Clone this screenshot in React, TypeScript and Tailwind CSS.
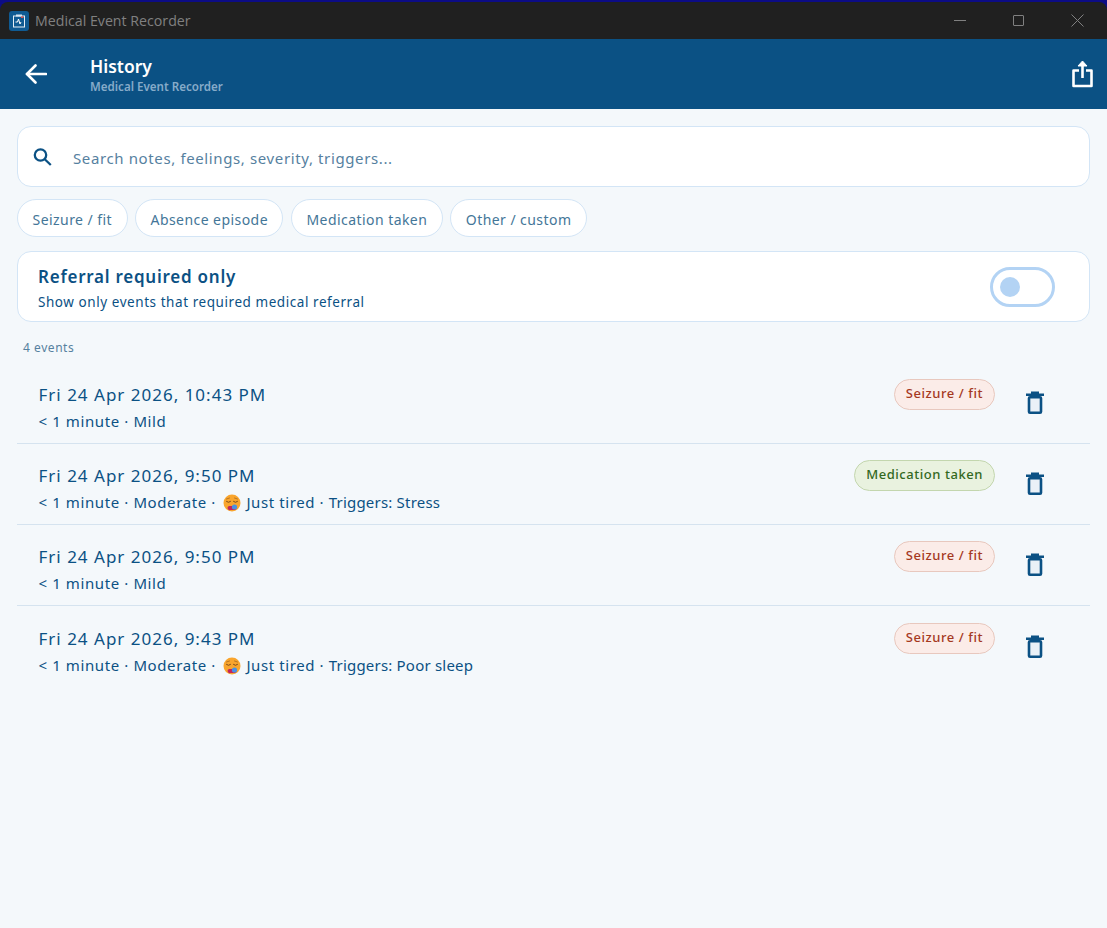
const events = [
  { when: 'Fri 24 Apr 2026, 10:43 PM', detail: '< 1 minute · Mild', kind: 'Seizure / fit' },
  { when: 'Fri 24 Apr 2026, 9:50 PM', detail: '< 1 minute · Moderate · ', feeling: 'Just tired · ', triggers: 'Triggers: Stress', kind: 'Medication taken' },
  { when: 'Fri 24 Apr 2026, 9:50 PM', detail: '< 1 minute · Mild', kind: 'Seizure / fit' },
  { when: 'Fri 24 Apr 2026, 9:43 PM', detail: '< 1 minute · Moderate · ', feeling: 'Just tired · ', triggers: 'Triggers: Poor sleep', kind: 'Seizure / fit' },
]

const chips = ['Seizure / fit', 'Absence episode', 'Medication taken', 'Other / custom']

function TiredFace() {
  return (
    <svg className="w-[18px] h-[18px] ml-[2.500px] mr-[5.500px] mt-[1px] shrink-0" viewBox="0 0 18 18" fill="none">
      <circle cx="9" cy="9" r="8.500" fill="#f9a52d" />
      <path d="M3.500 7.500q2 1.800 4 0M10.500 7.500q2 1.800 4 0" stroke="#7a4a1a" strokeWidth="1" strokeLinecap="round" />
      <path d="M3.500 5l3-1M14.500 5l-3-1" stroke="#a8681f" strokeWidth="0.800" strokeLinecap="round" />
      <path d="M6 12h5.500a2 2 0 0 1 0 4h-4a2 2 0 0 1-1.500-4z" fill="#c2255c" />
      <circle cx="11.500" cy="13" r="2.600" fill="#4a90e2" />
    </svg>
  )
}

function BackIcon() {
  return (
    <svg className="w-[22px] h-[20px]" viewBox="0 0 22 20" fill="none" stroke="white" strokeWidth="2.600" strokeLinecap="round" strokeLinejoin="round">
      <path d="M21 10H2" />
      <path d="M10.500 1.500L2 10l8.500 8.500" />
    </svg>
  )
}

function SearchIcon() {
  return (
    <svg className="w-[19px] h-[18px]" viewBox="0 0 19 18" fill="none" stroke="#0b5184" strokeWidth="2.300">
      <circle cx="7.500" cy="7" r="5.700" />
      <path d="M11.500 11l6.300 6" />
    </svg>
  )
}

function TrashIcon() {
  return (
    <svg className="w-[18px] h-[23px]" viewBox="0 0 18 23" fill="none">
      <path d="M5 0.500h8v2h5v2.500H0V2.500h5z" fill="#0b5184" />
      <rect x="3" y="6.200" width="12" height="15.500" rx="1" stroke="#0b5184" strokeWidth="2.600" fill="#eaf1f7" />
    </svg>
  )
}

function ShareIcon() {
  return (
    <svg className="w-[21px] h-[28px]" viewBox="0 0 21 28" fill="none" stroke="white" strokeWidth="2.600" strokeLinejoin="round">
      <path d="M7 10.500H1.500v15.500h18V10.500H14" />
      <path d="M10.500 18V4" />
      <path d="M6 6L10.500 1 15 6z" fill="white" strokeWidth="1" />
    </svg>
  )
}

function AppLogo() {
  return (
    <svg className="w-5 h-5" viewBox="0 0 20 20">
      <rect width="20" height="20" rx="3" fill="#0f5a92" />
      <rect x="4.500" y="5" width="11" height="11" fill="none" stroke="#e6eef5" strokeWidth="1" />
      <rect x="7" y="3.500" width="6" height="2" fill="#d8e6f2" />
      <path d="M6.500 11h2l1-3 1.500 5 1-2" fill="none" stroke="#fff" strokeWidth="1" />
      <rect x="12" y="5.500" width="2.500" height="1.500" fill="#d9534f" />
    </svg>
  )
}

function Badge({ kind }: { kind: string }) {
  const med = kind === 'Medication taken'
  return (
    <span
      className={
        med
          ? 'h-[31px] px-[11px] flex items-center rounded-full border border-[#c3d6ae] bg-[#e9f2df] text-[#33691e] text-[13px] font-medium tracking-[0.55px]'
          : 'h-[31px] px-[11px] flex items-center rounded-full border border-[#e8c8be] bg-[#fbece8] text-[#a5391f] text-[13px] font-medium tracking-[0.55px]'
      }
    >
      {kind}
    </span>
  )
}

export default function App() {
  return (
    <div className="w-[1107px] h-[928px] flex flex-col overflow-hidden bg-[#0c0c86] font-['Noto_Sans','Open_Sans',sans-serif]">
      {/* window title bar */}
      <div className="h-[37px] mt-[2px] rounded-t-[8px] bg-[#202020] flex items-center pl-[9px]">
        <AppLogo />
        <span className="ml-[6px] text-[14.200px] font-['Open_Sans',sans-serif] text-[#808080]">Medical Event Recorder</span>
        <div className="ml-auto flex items-center">
          <div className="w-[59px] flex justify-center"><div className="w-3 h-px bg-[#808080]" /></div>
          <div className="w-[59px] flex justify-center"><div className="w-[11px] h-[11px] border border-[#808080] rounded-[1px]" /></div>
          <div className="w-[59px] flex justify-center">
            <svg className="w-[13px] h-[13px]" viewBox="0 0 13 13" stroke="#808080" strokeWidth="1"><path d="M0.500 0.500l12 12M12.500 0.500l-12 12" /></svg>
          </div>
        </div>
      </div>

      {/* app bar */}
      <header className="h-[70px] bg-[#0b5184] flex items-center text-white">
        <div className="w-[71px] pl-[25px]">
          <BackIcon />
        </div>
        <div className="ml-[19px] flex flex-col pt-[1px]">
          <span className="text-[17.500px] leading-[24px] font-semibold">History</span>
          <span className="text-[11.600px] leading-[18px] font-semibold text-[#86abc9]">Medical Event Recorder</span>
        </div>
        <div className="ml-auto mr-[14px]">
          <ShareIcon />
        </div>
      </header>

      <main className="flex-1 bg-[#f4f8fb] flex flex-col px-[17px] pt-[17px]">
        <div className="h-[61px] rounded-[14px] border border-[#d3e5f6] bg-white flex items-center pl-[15px]">
          <SearchIcon />
          <span className="ml-[21px] pt-[3px] text-[15px] tracking-[0.62px] text-[#56819f]">Search notes, feelings, severity, triggers...</span>
        </div>

        <div className="flex gap-[7.500px] mt-[12px]">
          {chips.map((chip) => (
            <span key={chip} className="h-[38px] px-[14.500px] pt-[2px] flex items-center rounded-full border border-[#d3e5f6] bg-white text-[14px] tracking-[0.44px] text-[#447698]">
              {chip}
            </span>
          ))}
        </div>

        <div className="h-[71px] mt-[14px] rounded-[14px] border border-[#d3e5f6] bg-white flex items-center pl-[20px] pr-[34px]">
          <div className="flex flex-col pt-[6px]">
            <span className="text-[17px] leading-[25px] font-semibold tracking-[0.75px] text-[#0b5184]">Referral required only</span>
            <span className="text-[13.500px] leading-[27px] tracking-[0.56px] text-[#0b5184]">Show only events that required medical referral</span>
          </div>
          <div className="ml-auto w-[65px] h-[40px] rounded-full border-[3px] border-[#b3d3f4] flex items-center pl-[7px]">
            <div className="w-[20px] h-[20px] rounded-full bg-[#b3d3f4]" />
          </div>
        </div>

        <div className="mt-[17px] pl-[6px] text-[12px] leading-[18px] tracking-[0.55px] text-[#56819f]">4 events</div>

        <div className="flex flex-col mt-[6px]">
          {events.map((ev, i) => (
            <div key={i} className="h-[81px] flex border-b border-[#d5e3ef] last:border-b-0 last:pt-[1px] pl-[21.500px] pr-[46px]">
              <div className="flex flex-col pt-[20px]">
                <span className="text-[17px] leading-[24px] tracking-[1px] text-[#0b5184]">{ev.when}</span>
                <div className="flex items-center mt-[3px] text-[15px] leading-[22px] tracking-[0.6px] text-[#0b5184] whitespace-pre">
                  <span>{ev.detail}</span>
                  {ev.feeling && <TiredFace />}
                  {ev.feeling && <span>{ev.feeling}</span>}
                  {ev.triggers && <span className="tracking-[0.2px]">{ev.triggers}</span>}
                </div>
              </div>
              <div className="ml-auto flex items-start pt-[15.500px]">
                <Badge kind={ev.kind} />
                <div className="ml-[31px] mt-[12.500px]">
                  <TrashIcon />
                </div>
              </div>
            </div>
          ))}
        </div>
      </main>
    </div>
  )
}
